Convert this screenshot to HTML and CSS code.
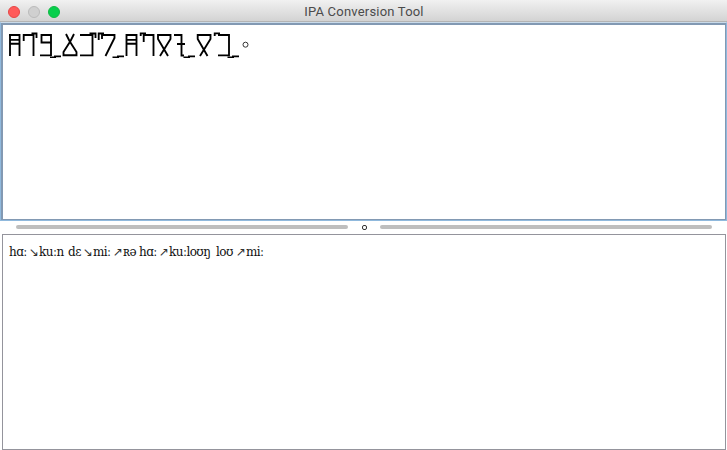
FILE: index.html
```
<!DOCTYPE html>
<html lang="en">
<head>
<meta charset="utf-8">
<title>IPA Conversion Tool</title>
<link rel="stylesheet" href="styles.css">
</head>
<body>
<div class="window">
  <header class="titlebar">
    <div class="controls"><i class="dot close"></i><i class="dot minimise"></i><i class="dot expand"></i></div>
    <h1>IPA Conversion Tool</h1>
  </header>
  <main class="source">
    <svg class="script" width="244" height="30" viewBox="8 30 244 30" aria-hidden="true">
      <path d="M10 34V56M9 35H20M19.5 34V56M10 39.8H19M10 43.7H19"/>
      <path d="M23.7 41V35H34M33.5 34V56M31.5 33.500H36.5V38"/>
      <path d="M51 42.5H41.5V35H51V56M40 55.4H51"/>
      <path d="M66 34L69.5 41L76.5 52V55.2H63.5V52L70.5 41L74 34"/>
      <path d="M80 35H92.500V55.3H80M89.5 33.500H95.5V38"/>
      <path d="M98.7 40V33.500H104M102 39V35H114.5V38L105.5 56"/>
      <path d="M126.5 34V56M126 35H137M136.5 34V56M127 39.8H136M127 43.7H136"/>
      <path d="M140.7 36V33.300H146M143.7 42V35H154M153.5 34V56"/>
      <path d="M168 56L158 39V35H170.5V39L160 56"/>
      <path d="M174 35H181.5V55.5H184M177 44H185"/>
      <path d="M207.500 56L197.700 39V35H210.500V39L200 56"/>
      <path d="M214.700 36V33.300H220M218 35H229V55.3H218"/>
      <path class="joiner" d="M50 57.2H56M54 56.4H61M112.500 57.2H119M117 56.4H124M183.500 57.2H190M188 56.4H195M227.500 57.2H234M232 56.4H239"/>
      <circle cx="245.500" cy="44.700" r="2.500"/>
    </svg>
  </main>
  <div class="divider"><i class="bar"></i><i class="grip"></i><i class="bar"></i></div>
  <section class="result">
    <p><span class="w30">hɑː<b>↘</b></span><span class="w29">kuːn</span><span class="w25">dɛ<b>↘</b></span><span class="w30">miː<b>↗</b></span><span class="w16">ʀə</span><span class="w30">hɑː<b>↗</b></span><span class="w47">kuːloʊŋ</span><span class="w30">loʊ<b>↗</b></span><span>miː</span></p>
  </section>
</div>
</body>
</html>
```
FILE: styles.css
```
* { box-sizing: border-box; }
body { margin: 0; background: #fff; }
.window { width: 727px; height: 450px; display: flex; flex-direction: column; overflow: hidden; }
.titlebar {
  height: 22px; flex: none; display: grid; grid-template-columns: 80px 1fr 80px; align-items: center;
  background: linear-gradient(#f1f1f1, #d3d3d3); border-bottom: 1px solid #b4b4b4;
}
.controls { display: flex; gap: 8px; padding-left: 8px; }
.dot { width: 12px; height: 12px; border-radius: 50%; border: 1px solid; }
.close { background: #ff5b5a; border-color: #e64746; }
.minimise { background: #d0d0d0; border-color: #bbb; }
.expand { background: #07cf4c; border-color: #10b944; }
h1 { margin: 0; padding: 1px 0 0 1px; font: 13px/22px Roboto, "Liberation Sans", sans-serif; letter-spacing: .2px; color: #4b4b4b; text-align: center; }
.source { height: 199px; flex: none; background: #fff; border: 1px solid #90b9dd; border-top-color: #c9dae9; box-shadow: inset 0 0 0 1px #8299b3, inset 2px 2px 0 #8299b3; padding: 7px 0 0 7px; }
.script { display: block; fill: none; stroke: #000; stroke-width: 1.850; }
.script circle { stroke: #333; stroke-width: 1; }
.script .joiner { stroke-width: 1.600; }
.divider { height: 13px; flex: none; display: flex; align-items: center; padding: 0 15px 1px 16px; }
.bar { height: 4px; width: 332px; border-radius: 2px; background: #bebebe; }
.grip { width: 5px; height: 5px; margin: 0 13px 0 14px; border: 1px solid #333; border-radius: 2px; }
.result { height: 216px; flex: none; margin: 0 1px 0 2px; border: 1px solid #94949c; padding: 9px 0 0 6px; }
.result p { margin: 0; display: flex; font: 12px/16px "DejaVu Serif", serif; letter-spacing: -.55px; color: #111; white-space: nowrap; }
.result span { display: flex; justify-content: space-between; }
.result b { font: 12px/16px "DejaVu Sans", sans-serif; letter-spacing: 0; color: #333; margin-left: -2px; }
.w30 { width: 30px; }
.w29 { width: 29px; }
.w25 { width: 25px; }
.w16 { width: 16px; }
.w47 { width: 47px; }
```
